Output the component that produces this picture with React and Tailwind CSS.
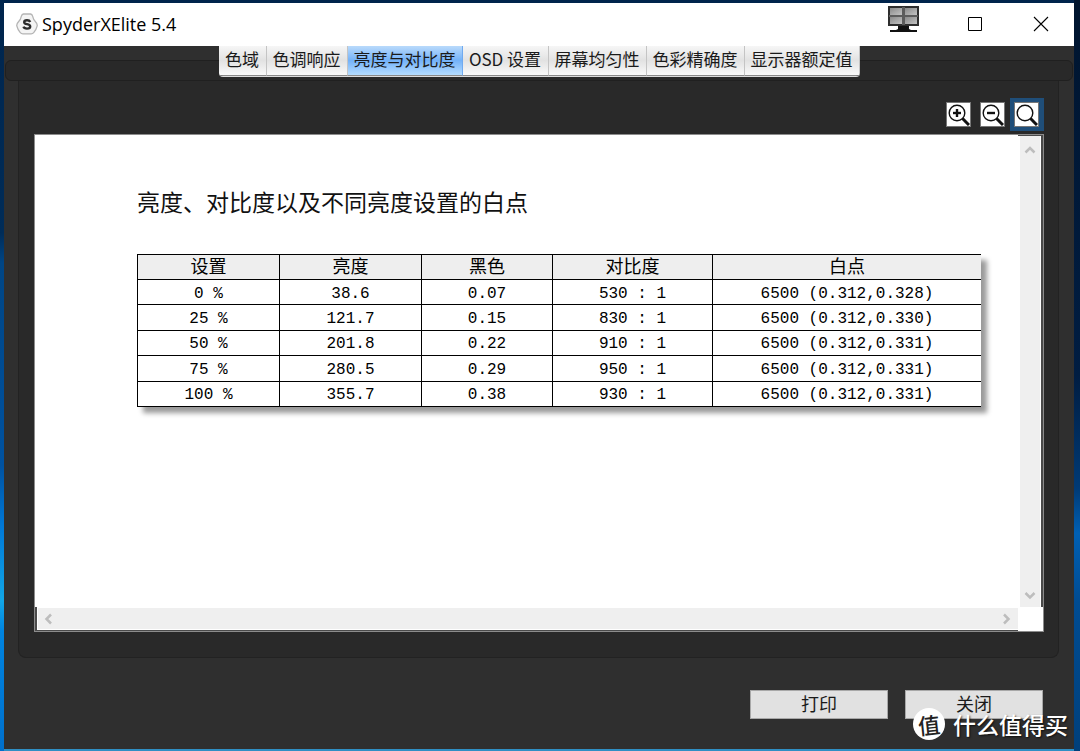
import { useState } from "react";
import clsx from "clsx";

const TABS = [
  { label: "色域", width: "w-[48px]" },
  { label: "色调响应", width: "w-[81px]" },
  { label: "亮度与对比度", width: "w-[115px]" },
  { label: "OSD 设置", width: "w-[86px]" },
  { label: "屏幕均匀性", width: "w-[98px]" },
  { label: "色彩精确度", width: "w-[98px]" },
  { label: "显示器额定值", width: "w-[115px]" },
];

const COLUMNS = ["设置", "亮度", "黑色", "对比度", "白点"];

const ROWS = [
  ["0 %", "38.6", "0.07", "530 : 1", "6500 (0.312,0.328)"],
  ["25 %", "121.7", "0.15", "830 : 1", "6500 (0.312,0.330)"],
  ["50 %", "201.8", "0.22", "910 : 1", "6500 (0.312,0.331)"],
  ["75 %", "280.5", "0.29", "950 : 1", "6500 (0.312,0.331)"],
  ["100 %", "355.7", "0.38", "930 : 1", "6500 (0.312,0.331)"],
];

function Logo() {
  return (
    <svg width="22" height="22" viewBox="0 0 22 22" fill="none">
      <path
        d="M7.500 1h7q1.600.3 2 1.800 1 4 2.800 5.700 2.200 2.200 1.900 4.300-1 4-3.500 6.800-1 1.100-2.600 1.200H6.900q-1.600-.1-2.600-1.200Q1.800 16.800.8 12.800q-.3-2.100 1.900-4.300 1.800-1.700 2.800-5.700.4-1.500 2-1.800z"
        fill="#f4f4f4"
        stroke="#b4b4b4"
        strokeWidth="1.300"
      />
      <path
        d="M14.200 8.900q-.7-1.600-3.200-1.600-2.800 0-2.800 1.900 0 1.400 2.800 1.900 3.200.5 3.200 2.400 0 2.100-3.200 2.100-2.900 0-3.500-1.900"
        stroke="#2b2b2b"
        strokeWidth="2.400"
      />
    </svg>
  );
}

function MonitorIcon() {
  return (
    <svg width="31" height="27" viewBox="0 0 31 27">
      <defs>
        <linearGradient id="screen" x1="0" y1="0" x2="1" y2="1">
          <stop offset="0" stopColor="#8a8a8a" />
          <stop offset="1" stopColor="#c2c2c2" />
        </linearGradient>
      </defs>
      <rect width="31" height="20" fill="#2e2e2e" />
      <rect x="2" y="2" width="12" height="7" fill="url(#screen)" />
      <rect x="17" y="2" width="12" height="7" fill="url(#screen)" />
      <rect x="2" y="11" width="12" height="7" fill="url(#screen)" />
      <rect x="17" y="11" width="12" height="7" fill="url(#screen)" />
      <path d="M14 1h3v18h-3zM1 9h29v2H1z" fill="#5c5c5c" />
      <path d="M10 20h11v3l2 1H8l2-1z" fill="#111" />
      <path d="M2 24h27v2H2z" fill="#111" />
    </svg>
  );
}

function Magnifier({ sign }) {
  return (
    <svg width="23" height="23" viewBox="0 0 23 23" fill="none" stroke="#111">
      <circle cx="10" cy="10" r="7.800" strokeWidth="1.400" />
      <path d="M15.500 15.500l6.500 6.500" strokeWidth="3" />
      {sign && <path d="M6 10h8" strokeWidth="2.400" />}
      {sign === "plus" && <path d="M10 6v8" strokeWidth="2.400" />}
    </svg>
  );
}

function ToolButton({ label, sign, focused }) {
  return (
    <div className={clsx("border-4 pr-px", focused ? "border-[#1f4e79] bg-[#1f4e79]" : "border-transparent")}>
      <button
        aria-label={label}
        className="grid size-[25px] place-items-center overflow-hidden border border-[#777] bg-white"
      >
        <Magnifier sign={sign} />
      </button>
    </div>
  );
}

function Arrow({ d, label }) {
  return (
    <button aria-label={label} className="grid size-5 place-items-center">
      <svg width="12" height="12" viewBox="0 0 12 12" fill="none" stroke="#bdbdbd" strokeWidth="2.500">
        <path d={d} />
      </svg>
    </button>
  );
}

function TitleBar() {
  return (
    <header className="flex h-[43px] shrink-0 bg-white text-black">
      <div className="flex flex-1 items-center gap-1 pb-[2px] pl-3">
        <Logo />
        <h1 className="font-['Open_Sans',sans-serif] text-[18px] leading-6">SpyderXElite 5.4</h1>
      </div>
      <button aria-label="显示器" className="flex w-[78px] items-start justify-center pt-[3px]">
        <MonitorIcon />
      </button>
      <button aria-label="最大化" className="grid w-[66px] place-items-center pb-px">
        <svg width="16" height="16" viewBox="0 0 16 16" fill="none" stroke="#000">
          <path d="M1.500 1.500h13v13h-13z" />
        </svg>
      </button>
      <button aria-label="关闭窗口" className="grid w-[66px] place-items-center pb-px">
        <svg width="16" height="16" viewBox="0 0 16 16" fill="none" stroke="#000" strokeWidth="1.100">
          <path d="M1 1l14 14M15 1L1 15" />
        </svg>
      </button>
    </header>
  );
}

function TabBar({ active, onSelect }) {
  return (
    <nav className="relative flex h-[35px] shrink-0 justify-center">
      {/* groove the tabs sit on */}
      <div className="absolute inset-x-px top-[14px] bottom-0 rounded-md border border-[#202020] bg-[#292929]" />
      <div className="relative flex h-[31px] overflow-hidden rounded-b-sm border-b border-[#dcdcdc]">
        {TABS.map((tab, i) => (
          <button
            key={tab.label}
            onClick={() => onSelect(i)}
            className={clsx(
              "h-[30px] border-r border-b border-b-[#8a8a8a] pb-1 text-center text-[17px] leading-6 whitespace-nowrap text-[#1a1a1a]",
              tab.width,
              i === active
                ? "border-r-[#6faaf0] bg-linear-to-b from-[#b9dafb] via-[#74b2f8] to-[#b4dcff]"
                : "border-r-[#c4c4c4] bg-linear-to-b from-[#f6f6f6] via-[#e2e2e2] to-[#fafafa]"
            )}
          >
            {tab.label}
          </button>
        ))}
      </div>
    </nav>
  );
}

function ReportTable() {
  return (
    <table className="h-[153px] w-full table-fixed border-collapse bg-white text-center text-black shadow-[6px_6px_5px_rgba(0,0,0,0.4)]">
      <colgroup>
        <col className="w-[142px]" />
        <col className="w-[142px]" />
        <col className="w-[131px]" />
        <col className="w-[160px]" />
        <col />
      </colgroup>
      <thead>
        <tr className="bg-[#eee]">
          {COLUMNS.map((name) => (
            <th
              key={name}
              className="border border-black p-0 pb-1 text-[18px] leading-5 font-normal last:border-r-0"
            >
              {name}
            </th>
          ))}
        </tr>
      </thead>
      <tbody className="font-['Liberation_Mono',monospace] text-[16px] leading-5">
        {ROWS.map((row) => (
          <tr key={row[0]}>
            {row.map((value, i) => (
              <td key={i} className="border border-black p-0 pt-[3px] last:border-r-0">
                {value}
              </td>
            ))}
          </tr>
        ))}
      </tbody>
    </table>
  );
}

function ReportView() {
  return (
    <div className="grid flex-1 grid-cols-[1fr_25px] grid-rows-[1fr_24px] border border-[#8c8c8c] bg-white">
      <article className="pt-12 pr-[37px] pl-[102px]">
        <h2 className="mb-[35px] text-[23px] leading-9 text-[#111]">亮度、对比度以及不同亮度设置的白点</h2>
        <ReportTable />
      </article>
      <div className="flex flex-col justify-between border-t border-r-2 border-[#4a4a4a] bg-white pl-[2px]">
        <div className="mr-px flex flex-1 flex-col items-center justify-between bg-[#efefef] pt-1 pb-[2px]">
          <Arrow label="向上" d="M1.500 8.500L6 4l4.500 4.500" />
          <Arrow label="向下" d="M1.500 4L6 8.500L10.500 4" />
        </div>
      </div>
      <div className="flex border-b border-l-2 border-[#4a4a4a] pt-px pb-px pl-px">
        <div className="flex flex-1 items-center justify-between bg-[#efefef] pr-[2px]">
          <Arrow label="向左" d="M9 1.500L4.500 6L9 10.500" />
          <Arrow label="向右" d="M4 1.500L8.500 6L4 10.500" />
        </div>
      </div>
    </div>
  );
}

function Watermark() {
  return (
    <div className="pointer-events-none absolute right-3 bottom-[11px] flex items-center gap-2">
      <span className="grid size-8 place-items-center rounded-full bg-white text-[22px] leading-8 font-medium text-[#222]">
        <span className="-rotate-6">值</span>
      </span>
      <span className="text-[23px] leading-8 font-medium text-white [text-shadow:1px_1px_2px_rgba(0,0,0,0.7)]">
        什么值得买
      </span>
    </div>
  );
}

export default function App() {
  const [active, setActive] = useState(2);

  return (
    <div className="relative flex min-h-screen bg-[#002550] font-['Noto_Sans_CJK_SC',sans-serif]">
      {/* wallpaper showing on both sides of the window */}
      <div className="w-1 shrink-0 bg-[linear-gradient(#00254d_0%,#002c58_31%,#004584_35%,#0052a0_62%,#0078d7_70%,#12a6e6_80%,#0084e0_84%,#0070cc_100%)]" />
      <div className="flex flex-1 flex-col border-t-[3px] border-b-2 border-t-[#00244c] border-b-[#2f8fc4] bg-[#2f2f2f]">
        <TitleBar />
        <TabBar active={active} onSelect={setActive} />
        <main className="mr-[15px] ml-[14px] flex flex-1 flex-col rounded-b-lg border border-t-0 border-[#222] bg-[#292929] pt-[17px] pr-[14px] pb-[25px] pl-[15px]">
          <div className="mb-[3px] flex justify-end">
            <ToolButton label="放大" sign="plus" />
            <ToolButton label="缩小" sign="minus" />
            <ToolButton label="实际大小" focused />
          </div>
          <ReportView />
        </main>
        <footer className="flex justify-end gap-[17px] pt-8 pr-[31px] pb-[30px]">
          {["打印", "关闭"].map((label) => (
            <button
              key={label}
              className="h-[29px] w-[138px] border border-[#a8a8a8] bg-[#e1e1e1] pb-1 text-[18px] leading-6 text-[#1a1a1a]"
            >
              {label}
            </button>
          ))}
        </footer>
      </div>
      <div className="w-[6px] shrink-0 bg-[linear-gradient(#00152f_0%,#001d42_50%,#003a75_65%,#0060b4_71%,#004c92_80%,#00407c_100%)]" />
      <Watermark />
    </div>
  );
}
